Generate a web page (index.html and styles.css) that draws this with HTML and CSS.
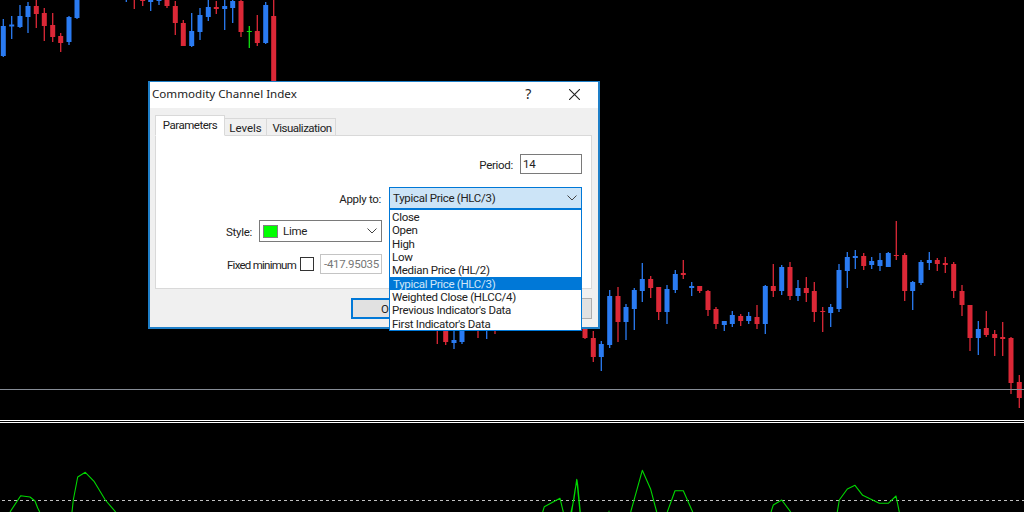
FILE: index.html
```html
<!DOCTYPE html>
<html lang="en">
<head>
<meta charset="utf-8">
<title>Commodity Channel Index</title>
<link rel="stylesheet" href="styles.css">
</head>
<body>
<svg class="chart" viewBox="0 0 1024 512" width="1024" height="512" aria-hidden="true">
  <path class="wick blue" d="M3.3 19V57M11.7 16V39M20 5V28M28 2V33M69 16V45M77 0V19M126.3 0V2M150.7 0V11M159 0V5M191.7 13V47M200 8V40M208.3 0V21M224.7 0V30M232.7 0V23M265.7 2V44M454 325V349M462 325V344M486.7 325V339M601.3 341V371M609.7 290V348M626 304V340M634.3 288V330M642.3 263V302M667 285V324M675.3 270V293M691.7 282V296M724.3 321V331M732.3 311V327M748.7 312V324M765.3 285V334M781.7 265V295M798 280V301M830.7 304V327M839 264V312M847.3 252V288M855.3 250V269M871.7 257V269M880 253V271M888.3 252V267M912.7 281V310M921 260V285M929.3 252V270M978.3 321V355"/>
  <path class="body blue" d="M3.3 26V56M11.7 24.5V26.5M20 16V27M28 6V17M69 17V42M77 0V18M150.7 0V2M159 0V1M191.7 31V46M200 15V32M208.3 7V17M224.7 6V9M232.7 1V8M265.7 5V43M454 340V343M462 325V342M601.3 344V357M609.7 296V345M626 307V322M634.3 290V309M642.3 279V291M667 289V312M675.3 274V290M691.7 286V288M724.3 321V325M732.3 315V324M748.7 316V321M765.3 286V324M781.7 267V291M798 288V296M830.7 307V313M839 270V309M847.3 257V271M855.3 256V258M871.7 261V265M880 260V266M888.3 253V267M912.7 282V291M921 262V283M929.3 260V263M978.3 329V338"/>
  <path class="wick red" d="M36.3 0V28M44.3 8V41M52.7 13V42M60.7 33V52M134.3 0V9M142.7 0V6M167 0V8M175.3 1V35M183.3 20V46M216.3 1V14M241 0V37M257.3 15V46M273.7 0V82M437.3 325V344M445.7 325V345M478 325V338M495 325V334M585 325V339M593.3 331V362M618 287V342M650.7 276V298M658.7 287V320M683.3 260V279M699.7 286V293M708 290V316M716 307V329M740.7 314V326M757 305V329M773.3 264V297M790 262V300M806.3 277V302M814.3 282V322M822.7 307V332M863.7 253V270M896.3 221V260M904.7 253V301M937.3 258V271M945.3 257V273M953.7 262V298M962 285V316M970 305V351M986.3 311V337M994.7 330V356M1002.7 322V356M1011 337V394M1019.3 375V408"/>
  <path class="body red" d="M36.3 6V14M44.3 13V26M52.7 25V37M60.7 36V43M142.7 0V1M167 0V6M175.3 6V23M183.3 23V46M216.3 7V9M241 1V32M257.3 31V43M273.7 16V82M445.7 325V342M585 325V338M593.3 338V357M618 296V322M650.7 279V288M658.7 287V312M683.3 273V275M699.7 286V291M708 291V310M716 309V324M740.7 316V321M757 317V324M773.3 286V291M790 267V296M806.3 288V293M814.3 291V312M822.7 311V312M863.7 256V266M896.3 255V256M904.7 255V291M937.3 260V264M945.3 263V265M953.7 264V291M962 291V305M970 305V338M986.3 328V335M994.7 334V338M1002.7 337V339M1011 338V383M1019.3 382V398"/>
  <path class="wick lime" d="M249.3 26V48"/>
  <path class="body lime" d="M249.3 31V32"/>
  <path class="level" d="M0 389.5H1024"/>
  <path class="divider" d="M0 420.5H1024M0 422.5H1024"/>
  <path class="dash" d="M2 500.5H1024"/>
  <path class="cci" d="M10 512L20.7 495.7 30 497 35 501 37.7 508 39.7 512M72 512L73.3 500 77.7 477 85.3 472.3 94.3 481.7 105.3 500 115.7 512M542.7 512L544.3 506.7 560 498.3 563.3 512M571 512L574 499 576.7 479.3 580 512M571.7 512L575 490 577 480 577.7 485 580.3 512M608.5 511.5L609.5 511M630.7 512L642.3 470.3 650.7 489.3 656.7 512M667.3 512L675 490.7 683.3 490.7 692.7 512M771 512L773.3 505 781.7 500 790.7 512M837.3 512L839.3 500 847.3 489 855 485.3 862.7 495.3 879.3 503.3 888.3 503.3 896 496 899.3 512"/>
</svg>

<div class="dialog" role="dialog" aria-label="Commodity Channel Index">
  <header class="titlebar">
    <span class="title">Commodity Channel Index</span>
    <span class="help">?</span>
    <svg class="close" viewBox="0 0 11 11" width="11" height="11" aria-hidden="true"><path d="M0 0L11 11M11 0L0 11"/></svg>
  </header>
  <div class="content">
    <nav class="tabs">
      <span class="tab tab-active">Parameters</span>
      <span class="tab tab-levels">Levels</span>
      <span class="tab tab-vis">Visualization</span>
    </nav>
    <section class="panel">
      <div class="row row-period">
        <label class="label">Period:</label>
        <div class="input input-period">14</div>
      </div>
      <div class="row row-apply">
        <label class="label">Apply to:</label>
        <div class="combo-wrap">
          <div class="combo combo-open">
            <span>Typical Price (HLC/3)</span>
            <svg class="chevron" viewBox="0 0 10 6" width="10" height="6" aria-hidden="true"><path d="M0.5 0.5L5 5 9.5 0.5"/></svg>
          </div>
          <ul class="dropdown">
            <li>Close</li>
            <li>Open</li>
            <li>High</li>
            <li>Low</li>
            <li>Median Price (HL/2)</li>
            <li class="selected">Typical Price (HLC/3)</li>
            <li>Weighted Close (HLCC/4)</li>
            <li>Previous Indicator's Data</li>
            <li>First Indicator's Data</li>
          </ul>
        </div>
      </div>
      <div class="row row-left row-style">
        <label class="label">Style:</label>
        <div class="combo combo-style">
          <i class="swatch"></i>
          <span>Lime</span>
          <svg class="chevron" viewBox="0 0 10 6" width="10" height="6" aria-hidden="true"><path d="M0.5 0.5L5 5 9.5 0.5"/></svg>
        </div>
      </div>
      <div class="row row-left row-min">
        <label class="label label-min">Fixed minimum</label>
        <i class="checkbox"></i>
        <div class="input input-min">-417.95035</div>
      </div>
    </section>
    <footer class="buttons">
      <button class="btn btn-default">OK</button>
      <button class="btn">Cancel</button>
    </footer>
  </div>
</div>
</body>
</html>
```
FILE: styles.css
```css
* { box-sizing: border-box; }
html, body { margin: 0; height: 100%; }
body {
  background: #000;
  width: 1024px;
  height: 512px;
  overflow: hidden;
  position: relative;
  font-family: Roboto, "Liberation Sans", sans-serif;
  font-size: 11.5px;
  letter-spacing: -0.3px;
  color: #222;
}

/* Chart canvas */
.chart { position: absolute; left: 0; top: 0; display: block; }
.chart path { fill: none; }
.wick { stroke-width: 1.3; }
.body { stroke-width: 5; }
.blue { stroke: #2a7bf2; }
.red { stroke: #dc2837; }
.lime { stroke: #10e010; }
.body.lime { stroke-width: 5; }
.level { stroke: #868c96; stroke-width: 1; }
.divider { stroke: #fff; stroke-width: 1; }
.dash { stroke: #c0c0c0; stroke-width: 1.2; stroke-dasharray: 3 3; }
.cci { stroke: #00d800; stroke-width: 1.1; stroke-linejoin: round; }

/* Dialog window */
.dialog {
  position: absolute;
  left: 148px;
  top: 81px;
  width: 452px;
  height: 248px;
  background: #f0f0f0;
  border: 2px solid #1e7fc8;
  border-top-width: 1px;
  display: flex;
  flex-direction: column;
}
.titlebar {
  height: 26px;
  background: #fff;
  display: flex;
  align-items: center;
  padding: 0 18px 3px 2px;
  flex: none;
}
.title {
  flex: 1;
  font-family: "Noto Sans", sans-serif;
  font-size: 11.6px;
  letter-spacing: 0;
  color: #222;
}
.help {
  font-family: "Noto Sans", sans-serif;
  font-size: 14px;
  margin-right: 38px;
}
.close { margin-top: 2px; }
.close path { stroke: #222; stroke-width: 1.1; fill: none; }

.content {
  flex: 1;
  padding: 7px 6px 0 5px;
  display: flex;
  flex-direction: column;
  position: relative;
}
.tabs { display: flex; align-items: flex-end; height: 21px; position: relative; z-index: 1; margin-bottom: -1px; }
.tab {
  height: 18px;
  border: 1px solid #d9d9d9;
  border-left-width: 0;
  border-bottom-width: 1px;
  background: #f0f0f0;
  display: flex;
  align-items: center;
  justify-content: center;
  padding-top: 2px;
  letter-spacing: -0.5px;
}
.tab-active {
  width: 70px;
  height: 21px;
  background: #fff;
  border-left-width: 1px;
  border-bottom-color: #fff;
  padding: 0 0 1px;
}
.tab-levels { width: 42px; letter-spacing: 0; }
.tab-vis { width: 69px; padding-left: 2px; }

.panel {
  height: 154px;
  background: #fff;
  border: 1px solid #d9d9d9;
  padding: 18px 9px 0 0;
  display: flex;
  flex-direction: column;
}
.row { display: flex; justify-content: flex-end; align-items: center; }
.row-period { height: 20px; gap: 7px; }
.row-apply { height: 22px; margin-top: 13px; gap: 8px; }
.row-left { margin-right: 200px; }
.row-style { height: 22px; margin-top: 11px; gap: 7px; }
.row-min { height: 20px; margin-top: 12px; }
.label { padding-top: 2px; }
.label-min { letter-spacing: -0.75px; }

.input {
  height: 100%;
  background: #fff;
  border: 1px solid #7a7a7a;
  display: flex;
  align-items: center;
}
.input-period { width: 62px; padding-left: 2px; }
.input-min {
  width: 62px;
  margin-left: 6px;
  border-color: #c4c4c4;
  color: #777;
  padding-left: 3px;
}
.checkbox {
  width: 14px;
  height: 14px;
  margin-left: 4px;
  border: 1px solid #333;
  background: #fff;
}

.combo-wrap { position: relative; width: 193px; height: 100%; }
.combo {
  height: 100%;
  display: flex;
  align-items: center;
  justify-content: space-between;
}
.combo-open {
  background: #cce4f7;
  border: 1px solid #0078d7;
  padding: 0 4px 0 3px;
}
.combo-style {
  width: 123px;
  border: 1px solid #7a7a7a;
  background: #fff;
  padding: 0 4px 0 3px;
  justify-content: flex-start;
}
.combo-style span { flex: 1; margin-left: 5px; }
.swatch {
  width: 15px;
  height: 13px;
  background: #00ff00;
  border: 1px solid #808080;
}
.chevron path { stroke: #444; stroke-width: 1; fill: none; }

.dropdown {
  position: absolute;
  left: 0;
  top: 100%;
  z-index: 5;
  width: 193px;
  height: 122px;
  margin: 0;
  padding: 0;
  list-style: none;
  background: #fff;
  border: 1px solid #0078d7;
}
.dropdown li {
  height: 13.35px;
  line-height: 13.35px;
  padding: 1px 0 0 2px;
  color: #222;
  white-space: nowrap;
}
.dropdown .selected {
  background: #0078d7;
  color: #cfe6f8;
  padding-left: 3px;
}

.buttons {
  display: flex;
  justify-content: space-between;
  margin-top: 9px;
  padding-left: 196px;
}
.btn {
  width: 75px;
  height: 21px;
  padding: 0;
  font: inherit;
  color: #222;
  background: #e1e1e1;
  border: 1px solid #adadad;
}
.btn-default { border: 2px solid #0078d7; }
```
